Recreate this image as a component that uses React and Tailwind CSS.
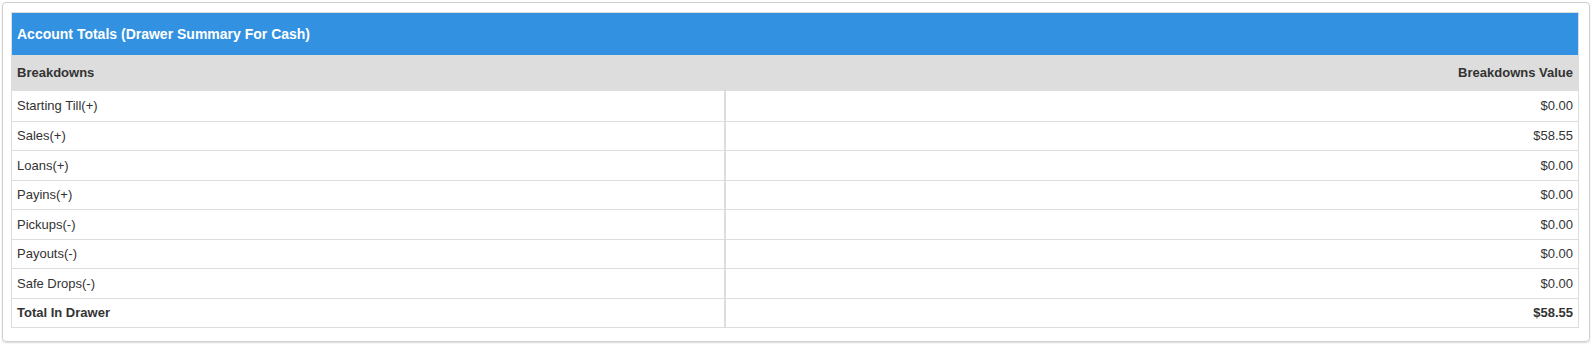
import React from 'react';

const rows = [
    { label: 'Starting Till(+)', value: '$0.00' },
    { label: 'Sales(+)', value: '$58.55' },
    { label: 'Loans(+)', value: '$0.00' },
    { label: 'Payins(+)', value: '$0.00' },
    { label: 'Pickups(-)', value: '$0.00' },
    { label: 'Payouts(-)', value: '$0.00' },
    { label: 'Safe Drops(-)', value: '$0.00' },
];

export default function App() {
    return (
        <div className="p-[2px] bg-white" style={{ fontFamily: '"Liberation Sans", Arial, sans-serif' }}>
            <div className="border border-[#cfcfcf] rounded-[4px] shadow-[0_1px_2px_rgba(0,0,0,0.15)] pl-[8px] pr-[10px] pt-[9px] pb-[12px] h-[340px]">
                <div className="border border-[#dddddd]">
                    {/* title bar */}
                    <div className="h-[42px] bg-[#3391e1] flex items-center px-[5px] text-white text-[14px] font-bold">
                        Account Totals (Drawer Summary For Cash)
                    </div>
                    {/* column header */}
                    <div className="h-[36px] bg-[#dddddd] flex items-center justify-between px-[5px] text-[13px] font-bold text-[#333]">
                        <span>Breakdowns</span>
                        <span>Breakdowns Value</span>
                    </div>
                    {rows.map((r, i) => (
                        <div key={i} className={`flex h-[29.5px] text-[13px] text-[#333] ${i > 0 ? 'border-t border-[#dddddd]' : ''}`}>
                            <div className="w-[714px] border-r-2 border-[#dddddd] flex items-center px-[5px]">{r.label}</div>
                            <div className="flex-1 flex items-center justify-end px-[5px]">{r.value}</div>
                        </div>
                    ))}
                    <div className="flex h-[29.5px] text-[13px] font-bold text-[#333] border-t border-[#dddddd]">
                        <div className="w-[714px] border-r-2 border-[#dddddd] flex items-center px-[5px]">Total In Drawer</div>
                        <div className="flex-1 flex items-center justify-end px-[5px]">$58.55</div>
                    </div>
                </div>
            </div>
        </div>
    );
}
